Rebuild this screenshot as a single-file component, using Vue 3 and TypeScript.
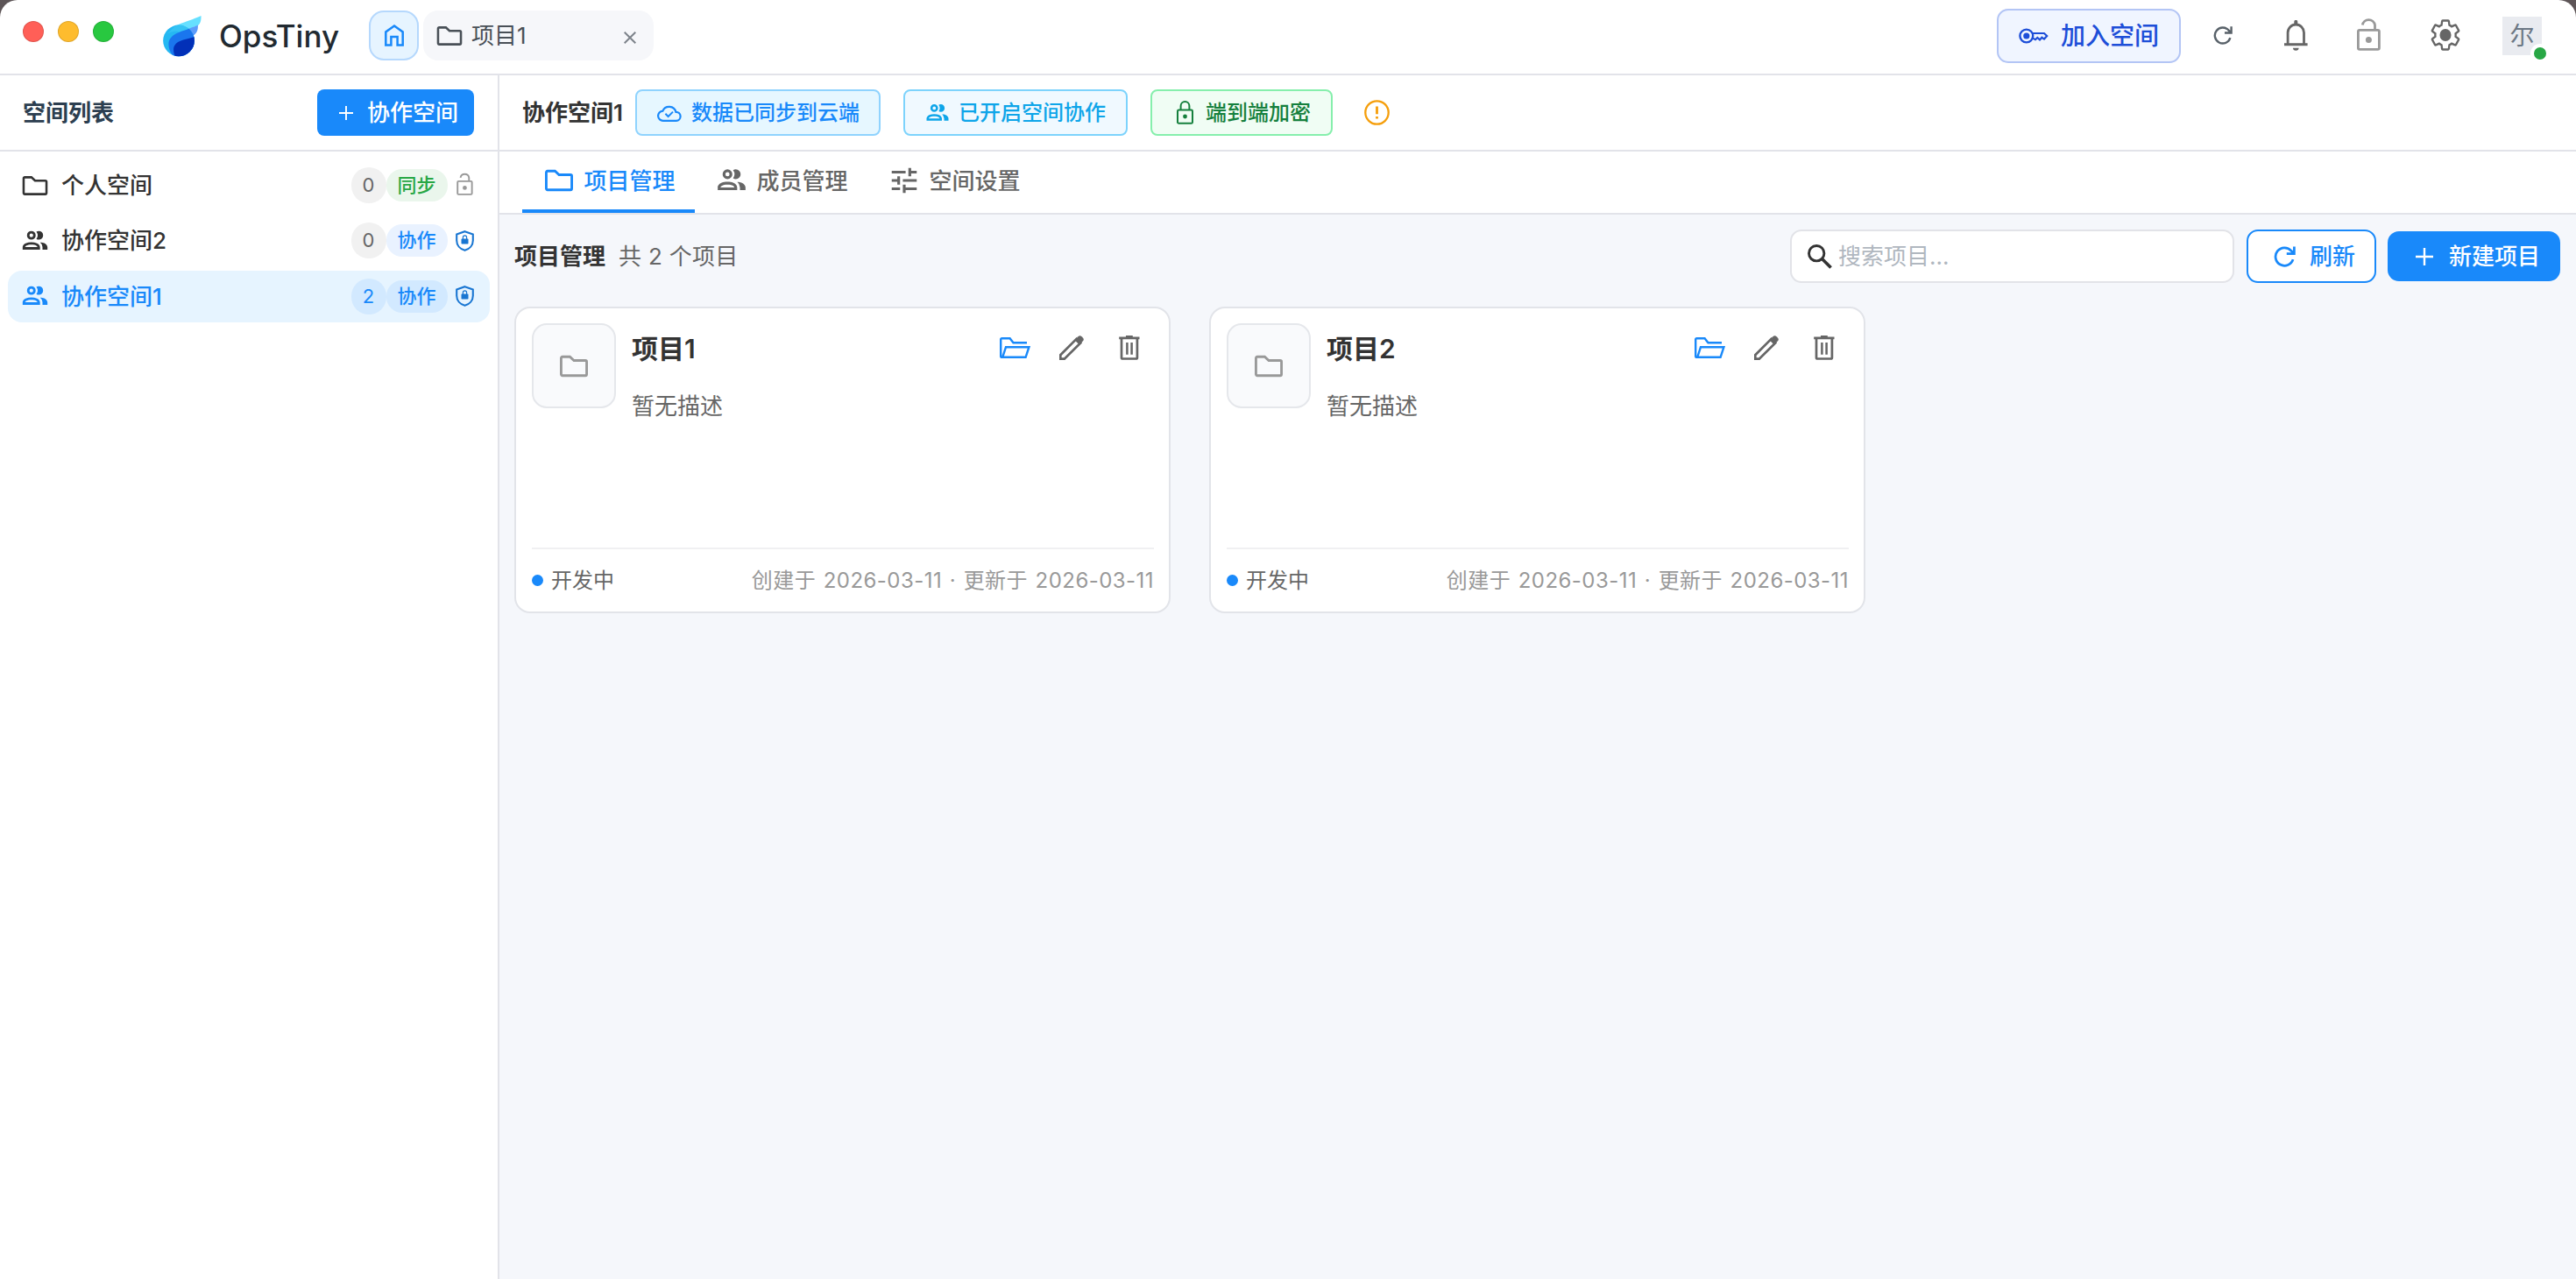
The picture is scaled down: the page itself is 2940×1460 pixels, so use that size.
<script setup lang="ts">
interface Space {
  id: number
  name: string
  icon: string
  count: number
  tag: string
  kind: 'sync' | 'team'
  guard: string
}

interface Project {
  id: number
  name: string
  desc: string
  status: string
  created: string
  updated: string
}

const spaces: Space[] = [
  { id: 1, name: '个人空间', icon: 'folder', count: 0, tag: '同步', kind: 'sync', guard: 'unlock' },
  { id: 2, name: '协作空间2', icon: 'group', count: 0, tag: '协作', kind: 'team', guard: 'shield' },
  { id: 3, name: '协作空间1', icon: 'group', count: 2, tag: '协作', kind: 'team', guard: 'shield' },
]
const activeSpace = 3

const tabs = [
  { label: '项目管理', icon: 'folder' },
  { label: '成员管理', icon: 'group' },
  { label: '空间设置', icon: 'tune' },
]
const activeTab = 0

const projects: Project[] = [
  { id: 1, name: '项目1', desc: '暂无描述', status: '开发中', created: '2026-03-11', updated: '2026-03-11' },
  { id: 2, name: '项目2', desc: '暂无描述', status: '开发中', created: '2026-03-11', updated: '2026-03-11' },
]
</script>

<template>
  <svg class="sprite" aria-hidden="true">
    <symbol id="folder" viewBox="0 0 24 24">
      <path d="M3.7 5.2H9.1L12 7.9H20.3a.9.9 0 0 1 .9.9V17.9a.9.9 0 0 1-.9.9H3.7a.9.9 0 0 1-.9-.9V6.1a.9.9 0 0 1 .9-.9z" fill="none" stroke="currentColor" stroke-width="1.8" />
    </symbol>
    <symbol id="group" viewBox="0 0 24 24">
      <path fill="currentColor" d="M13.07 10.41a5 5 0 0 0 0-5.82A3.4 3.4 0 0 1 15 4a3.5 3.5 0 0 1 0 7a3.4 3.4 0 0 1-1.93-.59M5.5 7.5A3.5 3.5 0 1 1 9 11a3.5 3.5 0 0 1-3.5-3.5m2 0A1.5 1.5 0 1 0 9 6a1.5 1.5 0 0 0-1.5 1.5M16 17v2H2v-2s0-4 7-4s7 4 7 4m-2 0c-.14-.78-1.33-2-5-2s-4.93 1.31-5 2m11.95-4A5.32 5.32 0 0 1 18 17v2h4v-2s0-3.63-6.06-4Z" />
    </symbol>
    <symbol id="tune" viewBox="0 0 24 24">
      <path fill="currentColor" d="M3 17v2h6v-2H3zM3 5v2h10V5H3zm10 16v-2h8v-2h-8v-2h-2v6h2zM7 9v2H3v2h4v2h2V9H7zm14 4v-2H11v2h10zm-6-4h2V7h4V5h-4V3h-2v6z" />
    </symbol>
    <symbol id="unlock" viewBox="0 0 27 38">
      <g fill="none" stroke="currentColor" stroke-width="2.8">
        <rect x="1.4" y="14.4" width="24" height="22" rx="1.6" />
        <path d="M20.5 14V8.6a7.2 7.2 0 0 0-14.2 0" />
      </g>
      <circle cx="13.4" cy="25.4" r="3.5" fill="currentColor" />
    </symbol>
    <symbol id="lock" viewBox="0 0 19 27">
      <g fill="none" stroke="currentColor" stroke-width="2">
        <rect x="1" y="10.5" width="17" height="15.3" rx="1.4" />
        <path d="M4.6 10.5V6a4.9 4.9 0 0 1 9.8 0v4.5" />
      </g>
      <circle cx="9.5" cy="18" r="2.4" fill="currentColor" />
    </symbol>
    <symbol id="shield" viewBox="0 0 21 24">
      <path d="M10.5 1.2L19.8 4.4V11.5C19.8 17 16 21.4 10.5 22.8C5 21.4 1.2 17 1.2 11.5V4.4Z" fill="none" stroke="currentColor" stroke-width="2.1" />
      <rect x="6.5" y="9.6" width="8" height="6" rx=".8" fill="currentColor" />
      <path d="M8.4 10V8a2.1 2.1 0 0 1 4.2 0V10" fill="none" stroke="currentColor" stroke-width="1.2" />
    </symbol>
    <symbol id="refresh" viewBox="0 0 22 21">
      <path d="M19.4 13.2A9 9 0 1 1 17.6 4.6L20.4 7.4M20.6 .3V7.5H13" fill="none" stroke="currentColor" stroke-width="2.4" />
    </symbol>
    <symbol id="plus" viewBox="0 0 20 20">
      <path d="M10 0V20M0 10H20" stroke="currentColor" stroke-width="2.4" />
    </symbol>
    <symbol id="open" viewBox="0 0 35 24">
      <path d="M31 6.2H15.5L11.6 1.2H2.6a1.4 1.4 0 0 0-1.4 1.4V21.4a1.4 1.4 0 0 0 1.4 1.4H29.6L33.4 11.2H7L3.4 22.4" fill="none" stroke="currentColor" stroke-width="2.4" />
    </symbol>
    <symbol id="pencil" viewBox="0 0 28 28">
      <path d="M1.3 26.7V22.2L19.6 3.8L24.2 8.4L5.8 26.7Z" fill="none" stroke="currentColor" stroke-width="2.7" />
      <path d="M17.5 5.2L21.4 1.2a3 3 0 0 1 4.2 0l1.2 1.2a3 3 0 0 1 0 4.2L22.8 10.5Z" fill="currentColor" />
    </symbol>
    <symbol id="trash" viewBox="0 0 24 28">
      <path d="M8 0h7.8v1.5h7.7v2.8H.2V1.5H8z" fill="currentColor" />
      <path d="M3 4V25.2a1.3 1.3 0 0 0 1.3 1.3H19.6a1.3 1.3 0 0 0 1.3-1.3V4" fill="none" stroke="currentColor" stroke-width="2.7" />
      <path d="M9.4 8V21.7M14.6 8V21.7" stroke="currentColor" stroke-width="2.5" />
    </symbol>
  </svg>

  <div class="window">
    <header class="topbar">
      <div class="lights"><i class="red"></i><i class="yellow"></i><i class="green"></i></div>
      <svg class="logo" viewBox="555 50 138 145">
        <path d="M689 53C655 70 585 84 566 116C580 140 640 110 664 91C683 90 690 76 689 53Z" fill="#66e0ff" />
        <path d="M678 85C650 100 590 106 579 146C590 170 640 140 660 122C674 116 679 103 678 85Z" fill="#5c9cfb" />
        <clipPath id="drop"><circle cx="612" cy="139" r="54" /></clipPath>
        <g clip-path="url(#drop)">
          <rect x="555" y="80" width="115" height="115" fill="#25b8f2" />
          <path d="M600 88C622 84 645 88 660 96L620 112C606 104 590 104 572 116Z" fill="#35c3f4" />
          <path d="M680 85C650 104 577 106 577 152C577 170 586 184 597 196H680Z" fill="#1a76ee" />
          <path d="M670 124C650 134 594 134 594 170C594 182 598 190 602 200H680Z" fill="#0230b8" />
        </g>
      </svg>
      <span class="brand">OpsTiny</span>
      <div class="home">
        <svg width="22" height="25" viewBox="0 0 22 25"><path d="M1.3 23.5V8.5L11 1.6L20.7 8.5V23.5H14.6V14H7.4V23.5Z" fill="none" stroke="currentColor" stroke-width="2.5" /></svg>
      </div>
      <div class="doc-tab">
        <svg width="34" height="34"><use href="#folder" /></svg>
        <span>项目1</span>
        <svg class="close" width="14" height="14" viewBox="0 0 14 14"><path d="M.7.7L13.3 13.3M13.3.7L.7 13.3" stroke="currentColor" stroke-width="2" /></svg>
      </div>

      <div class="tools">
        <button class="join">
          <svg width="34" height="18" viewBox="0 0 34 18">
            <circle cx="8.8" cy="9" r="7.4" fill="none" stroke="currentColor" stroke-width="2.4" />
            <circle cx="8.8" cy="9" r="3.6" fill="currentColor" />
            <path d="M16 6H29L32.2 9L29 12.6L26.4 10.8L24 13.4L21.3 11L19 13.2L16 11.6" fill="none" stroke="currentColor" stroke-width="2.2" />
          </svg>
          <span>加入空间</span>
        </button>
        <svg class="t-refresh" width="22" height="21"><use href="#refresh" /></svg>
        <svg class="t-bell" width="27" height="35" viewBox="0 0 27 35">
          <path d="M4.1 27V14.2a9.2 9.2 0 0 1 18.4 0V27" fill="none" stroke="currentColor" stroke-width="2.8" />
          <path d="M11.3 5V1.8a2 2 0 0 1 4 0V5zM0 26.2H26.6V29.2H0zM10 31.8H16.6a3.3 3 0 0 1-6.6 0z" fill="currentColor" />
        </svg>
        <svg class="t-lock" width="27" height="38"><use href="#unlock" /></svg>
        <svg class="t-gear" width="36" height="38" viewBox="1 1 22 22" preserveAspectRatio="none">
          <path transform="translate(12 12) scale(.95) translate(-12 -12)" fill="none" stroke="currentColor" stroke-width="1.5" d="M19.43 12.98c.04-.32.07-.64.07-.98 0-.34-.03-.66-.07-.98l2.11-1.65c.19-.15.24-.42.12-.64l-2-3.46c-.09-.16-.26-.25-.44-.25-.06 0-.12.01-.17.03l-2.49 1c-.52-.4-1.08-.73-1.69-.98l-.38-2.65C14.46 2.18 14.25 2 14 2h-4c-.25 0-.46.18-.49.42l-.38 2.65c-.61.25-1.17.59-1.69.98l-2.49-1c-.06-.02-.12-.03-.18-.03-.17 0-.34.09-.43.25l-2 3.46c-.13.22-.07.49.12.64l2.11 1.65c-.04.32-.07.65-.07.98 0 .33.03.66.07.98l-2.11 1.65c-.19.15-.24.42-.12.64l2 3.46c.09.16.26.25.44.25.06 0 .12-.01.17-.03l2.49-1c.52.4 1.08.73 1.69.98l.38 2.65c.03.24.24.42.49.42h4c.25 0 .46-.18.49-.42l.38-2.65c.61-.25 1.17-.59 1.69-.98l2.49 1c.06.02.12.03.18.03.17 0 .34-.09.43-.25l2-3.46c.12-.22.07-.49-.12-.64l-2.11-1.65z" />
          <circle cx="12" cy="12" r="4" fill="currentColor" />
        </svg>
        <div class="avatar">尔<i></i></div>
      </div>
    </header>

    <div class="body">
      <aside class="sidebar">
        <div class="side-head">
          <span>空间列表</span>
          <button class="add-space"><svg width="16" height="16"><use href="#plus" /></svg>协作空间</button>
        </div>
        <div class="space-list">
          <div v-for="s in spaces" :key="s.id" class="space" :class="{ active: s.id === activeSpace }">
            <svg width="34" height="34"><use :href="'#' + s.icon" /></svg>
            <span class="space-name">{{ s.name }}</span>
            <span class="count">{{ s.count }}</span>
            <span class="tag" :class="s.kind">{{ s.tag }}</span>
            <svg class="guard" :class="s.guard" width="21" height="26"><use :href="'#' + s.guard" /></svg>
          </div>
        </div>
      </aside>

      <main class="main">
        <div class="main-head">
          <span class="main-title">协作空间1</span>
          <span class="badge cloud">
            <svg width="28" height="20" viewBox="0 0 28 20"><path d="M7 18.8a5.6 5.6 0 0 1-.6-11.2A8 8 0 0 1 21.4 8.8a5 5 0 0 1 .4 10z" fill="none" stroke="currentColor" stroke-width="2.2" /><path d="M9.4 10.8l3.2 3.2 5.4-5.4" fill="none" stroke="currentColor" stroke-width="2" /></svg>
            数据已同步到云端
          </span>
          <span class="badge team"><svg width="30" height="30"><use href="#group" /></svg>已开启空间协作</span>
          <span class="badge secure"><svg width="19" height="27"><use href="#lock" /></svg>端到端加密</span>
          <svg class="warn" width="29" height="29" viewBox="0 0 29 29">
            <circle cx="14.5" cy="14.5" r="13.2" fill="none" stroke="currentColor" stroke-width="2.3" />
            <path d="M14.5 7.4V16.2M14.5 19V21.5" stroke="currentColor" stroke-width="2.8" />
          </svg>
        </div>

        <nav class="tabs">
          <div v-for="(t, i) in tabs" :key="t.label" class="tab" :class="{ active: i === activeTab }">
            <svg width="38" height="38"><use :href="'#' + t.icon" /></svg><span>{{ t.label }}</span>
          </div>
        </nav>

        <section class="content">
          <div class="toolbar">
            <h2>项目管理</h2>
            <span class="total">共 2 个项目</span>
            <div class="search">
              <svg width="28" height="28" viewBox="0 0 28 28"><circle cx="10.2" cy="10.2" r="8.7" fill="none" stroke="currentColor" stroke-width="2.9" /><path d="M16.3 16.3L26.6 26.6" stroke="currentColor" stroke-width="3.6" /></svg>
              <span>搜索项目...</span>
            </div>
            <button class="reload"><svg width="25" height="24"><use href="#refresh" /></svg>刷新</button>
            <button class="create"><svg width="20" height="20"><use href="#plus" /></svg>新建项目</button>
          </div>

          <div class="grid">
            <article v-for="p in projects" :key="p.id" class="card">
              <div class="card-top">
                <div class="thumb"><svg width="38" height="38"><use href="#folder" /></svg></div>
                <div class="info">
                  <h3>{{ p.name }}</h3>
                  <p>{{ p.desc }}</p>
                </div>
                <div class="actions">
                  <svg class="a-open" width="35" height="24"><use href="#open" /></svg>
                  <svg width="28" height="28"><use href="#pencil" /></svg>
                  <svg width="24" height="28"><use href="#trash" /></svg>
                </div>
              </div>
              <footer class="card-foot">
                <i></i><span class="status">{{ p.status }}</span>
                <span class="dates">创建于 {{ p.created }} · 更新于 {{ p.updated }}</span>
              </footer>
            </article>
          </div>
        </section>
      </main>
    </div>
  </div>
</template>

<style>
body {
  margin: 0;
  background: #5d5557;
}
</style>

<style scoped>
* {
  box-sizing: border-box;
}
.sprite {
  position: absolute;
  width: 0;
  height: 0;
}
svg {
  flex: none;
  display: block;
}
.window {
  width: 2940px;
  height: 1460px;
  display: flex;
  flex-direction: column;
  background: #fff;
  border-radius: 20px 20px 0 0;
  overflow: hidden;
  font-family: Inter, 'Noto Sans CJK SC', sans-serif;
  font-size: 26px;
  line-height: 38px;
  color: #333;
  white-space: nowrap;
}
button {
  font: inherit;
  display: flex;
  align-items: center;
  padding: 0;
  border: 0;
  font-weight: 500;
}

/* top bar */
.topbar {
  height: 86px;
  flex: none;
  display: flex;
  align-items: flex-start;
  border-bottom: 2px solid #e2e3e9;
}
.lights {
  display: flex;
  gap: 16px;
  margin: 24px 0 0 26px;
}
.lights i {
  width: 24px;
  height: 24px;
  border-radius: 50%;
  border: 1px solid rgba(0, 0, 0, 0.12);
}
.red { background: #ff5f57; }
.yellow { background: #febc2e; }
.green { background: #28c840; }
.logo {
  width: 46px;
  height: 48px;
  margin: 17px 0 0 55px;
}
.brand {
  margin: 19px 0 0 19px;
  width: 171px;
  line-height: 44px;
  font-size: 35px;
  font-weight: 500;
  color: #212a31;
}
.home {
  width: 57px;
  height: 57px;
  margin-top: 12px;
  display: flex;
  align-items: center;
  justify-content: center;
  color: #1989fa;
  background: #e6f4ff;
  border: 2px solid #b5d8fd;
  border-radius: 17px;
}
.doc-tab {
  display: flex;
  align-items: center;
  width: 263px;
  height: 57px;
  margin: 12px 0 0 5px;
  padding: 0 20px 0 13px;
  border-radius: 17px;
  background: #f6f7fa;
  color: #495057;
}
.doc-tab span {
  margin-left: 8px;
}
.doc-tab .close {
  margin: 5px 0 0 auto;
  color: #7d838a;
}
.tools {
  display: flex;
  margin-left: auto;
  margin-right: 39px;
  color: #666;
}
.join {
  width: 210px;
  height: 62px;
  margin-top: 10px;
  padding-left: 23px;
  gap: 14px;
  border: 2px solid #b3c5f5;
  border-radius: 13px;
  background: #f0f5ff;
  color: #1d4ed8;
  font-size: 28px;
}
.t-refresh {
  margin: 30px 0 0 37px;
  color: #59626a;
}
.t-bell {
  margin: 23px 0 0 59px;
}
.t-lock {
  margin: 20px 0 0 56px;
  color: #999;
}
.t-gear {
  margin: 21px 0 0 56px;
}
.avatar {
  position: relative;
  width: 45px;
  height: 44px;
  margin: 19px 0 0 47px;
  background: #e9ebf0;
  color: #6c7885;
  font-size: 28px;
  line-height: 44px;
  text-align: center;
}
.avatar i {
  position: absolute;
  right: -9px;
  bottom: -9px;
  width: 22px;
  height: 22px;
  border: 4px solid #fff;
  border-radius: 50%;
  background: #28a745;
}

.body {
  flex: 1;
  display: flex;
  min-height: 0;
}

/* sidebar */
.sidebar {
  width: 570px;
  flex: none;
  border-right: 2px solid #e2e3e9;
}
.side-head {
  height: 87px;
  display: flex;
  align-items: center;
  justify-content: space-between;
  padding: 0 27px 0 26px;
  border-bottom: 2px solid #e2e3e9;
  font-weight: 600;
  color: #2c3e50;
}
.add-space {
  width: 179px;
  height: 53px;
  padding-left: 25px;
  gap: 16px;
  border-radius: 8px;
  background: #1989fa;
  color: #fff;
}
.space-list {
  display: flex;
  flex-direction: column;
  gap: 4.4px;
  padding: 9px 9px 0;
}
.space {
  display: flex;
  align-items: center;
  height: 59px;
  padding: 0 18.5px 0 14px;
  border-radius: 16px;
  font-weight: 500;
}
.space.active {
  background: #e6f4ff;
  color: #1989fa;
}
.space-name {
  margin: 1px 0 0 13px;
}
.count {
  width: 40px;
  height: 41px;
  margin-left: auto;
  border-radius: 20px;
  background: #f1f1f1;
  color: #666;
  font-size: 22px;
  font-weight: 400;
  line-height: 41px;
  text-align: center;
}
.tag {
  width: 70px;
  height: 37px;
  border-radius: 18px;
  font-size: 22px;
  line-height: 37px;
  text-align: center;
}
.tag.sync {
  background: #eaf6ec;
  color: #28a745;
}
.tag.team {
  background: #e9f2ff;
  color: #1989fa;
}
.active .count,
.active .tag {
  background: #d2e9ff;
  color: #1989fa;
}
.guard {
  margin-left: 9px;
  color: #1976d2;
}
.guard.unlock {
  margin-bottom: 4px;
  color: #999;
}

/* main column */
.main {
  flex: 1;
  display: flex;
  flex-direction: column;
  min-width: 0;
}
.main-head {
  height: 87px;
  flex: none;
  display: flex;
  align-items: center;
  padding-left: 26px;
  border-bottom: 2px solid #e2e3e9;
}
.main-title {
  width: 129px;
  font-weight: 600;
}
.badge {
  display: flex;
  align-items: center;
  height: 53px;
  margin-right: 26px;
  border: 2px solid;
  border-radius: 8px;
  font-size: 24px;
  font-weight: 500;
}
.badge.cloud {
  width: 280px;
  padding-left: 23px;
  gap: 11px;
  color: #1989fa;
  background: #e6f7ff;
  border-color: #8fd3fe;
}
.badge.team {
  width: 256px;
  padding-left: 22px;
  gap: 9px;
  color: #0ea5e9;
  background: #f0f9ff;
  border-color: #7dd3fc;
}
.badge.secure {
  width: 208px;
  padding-left: 28px;
  gap: 14px;
  color: #15803d;
  background: #f0fdf4;
  border-color: #86efac;
}
.warn {
  margin-left: 10px;
  color: #f59e0b;
}
.tabs {
  height: 72px;
  flex: none;
  display: flex;
  padding-left: 26px;
  border-bottom: 2px solid #e2e3e9;
}
.tab {
  display: flex;
  align-items: center;
  gap: 10px;
  padding: 0 22.5px;
  border-bottom: 4px solid transparent;
  color: #666;
  font-weight: 500;
}
.tab span {
  margin-top: 2px;
}
.tab.active {
  color: #1989fa;
  border-color: #1989fa;
}
.content {
  flex: 1;
  padding: 17px 18px 0 17px;
  background: #f5f7fb;
}
.toolbar {
  display: flex;
  align-items: center;
  height: 61px;
}
h2,
h3,
p {
  margin: 0;
}
h2 {
  font-size: 26px;
  font-weight: 600;
}
.total {
  margin-left: 15px;
  letter-spacing: 0.3px;
  color: #666;
}
.search {
  display: flex;
  align-items: center;
  gap: 7px;
  width: 507px;
  height: 61px;
  margin-left: auto;
  padding-left: 18px;
  border: 2px solid #e2e3e8;
  border-radius: 13px;
  background: #fff;
}
.search span {
  color: #b0b7bf;
}
.reload {
  width: 148px;
  height: 61px;
  margin-left: 14px;
  padding-left: 29px;
  gap: 16px;
  border: 2px solid #1989fa;
  border-radius: 13px;
  background: #fff;
  color: #1989fa;
}
.create {
  width: 197px;
  height: 57px;
  margin-left: 13px;
  padding-left: 32px;
  gap: 18px;
  border-radius: 13px;
  background: #1989fa;
  color: #fff;
}
.grid {
  display: flex;
  gap: 44px;
  margin-top: 27px;
}
.card {
  display: flex;
  flex-direction: column;
  width: 749px;
  height: 350px;
  padding: 17px 17px 0 18px;
  border: 2px solid #e2e4e9;
  border-radius: 18px;
  background: #fff;
}
.card-top {
  flex: 1;
  display: flex;
  align-items: flex-start;
}
.thumb {
  display: flex;
  align-items: center;
  justify-content: center;
  width: 96px;
  height: 97px;
  border: 2px solid #e5e7eb;
  border-radius: 17px;
  background: #f9fafc;
  color: #999;
}
.info {
  margin-left: 18px;
}
.info h3 {
  margin-top: 7px;
  font-size: 30px;
  font-weight: 600;
  line-height: 44px;
}
.info p {
  margin-top: 25px;
  color: #666;
}
.actions {
  display: flex;
  align-items: center;
  gap: 40px;
  height: 28px;
  margin: 14px 16px 0 auto;
  color: #666;
}
.a-open {
  margin-right: -7px;
  color: #1989fa;
}
.card-foot {
  display: flex;
  align-items: center;
  height: 73px;
  border-top: 2px solid #f0f0f2;
  font-size: 24px;
}
.card-foot i {
  width: 13px;
  height: 13px;
  border-radius: 50%;
  background: #1989fa;
}
.status {
  margin: 1px 0 0 9px;
  color: #666;
}
.dates {
  margin: 1px 0 0 auto;
  letter-spacing: 0.45px;
  word-spacing: 1.4px;
  color: #999;
}
</style>
